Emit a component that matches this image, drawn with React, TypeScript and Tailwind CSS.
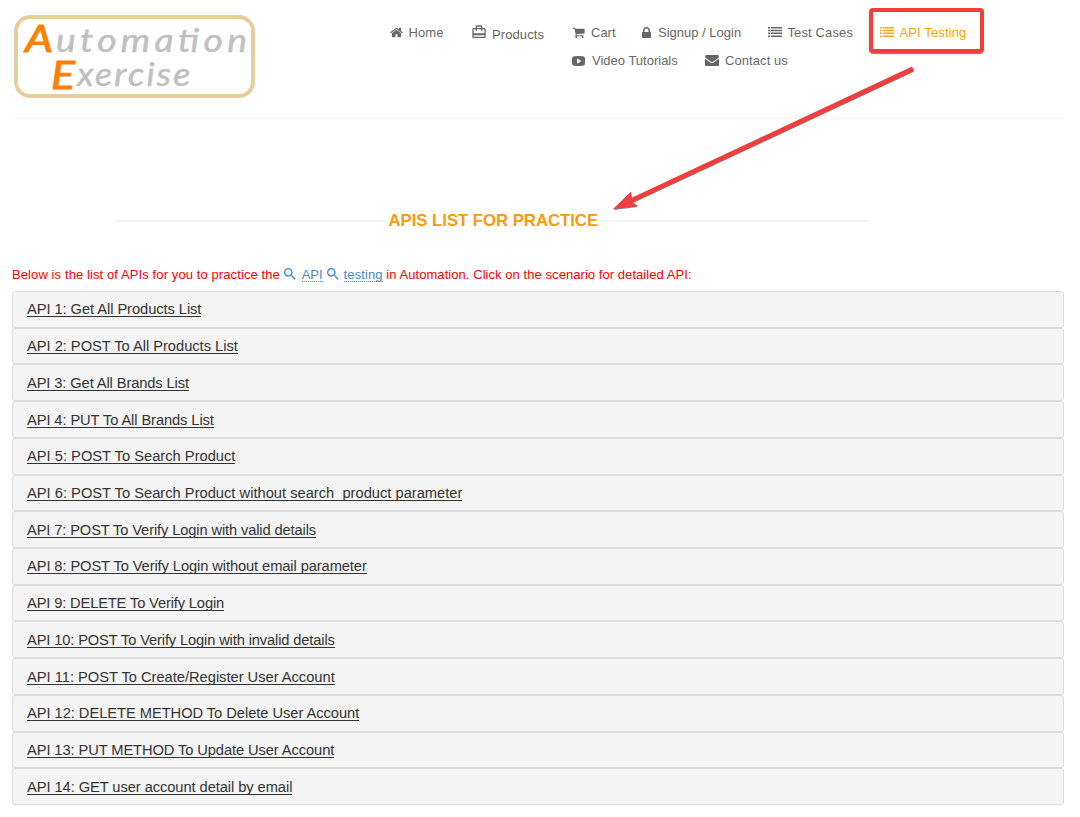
import type { ReactNode } from "react";
import { MdCardTravel, MdSearch } from "react-icons/md";

const HOME =
  "M1408 992v480q0 26-19 45t-45 19h-384v-384h-256v384h-384q-26 0-45-19t-19-45v-480q0-1 .5-3t.5-3l575-474 575 474q1 2 1 6zm223-69l-62 74q-8 9-21 11h-3q-13 0-21-7l-692-577-692 577q-12 8-24 7-13-2-21-11l-62-74q-8-10-7-23.5t11-21.5l719-599q32-26 76-26t76 26l244 204v-195q0-14 9-23t23-9h192q14 0 23 9t9 23v408l219 182q10 8 11 21.5t-7 23.5z";
const CART =
  "M704 1536q0 52-38 90t-90 38-90-38-38-90 38-90 90-38 90 38 38 90zm896 0q0 52-38 90t-90 38-90-38-38-90 38-90 90-38 90 38 38 90zm128-1088v512q0 24-16.5 42.5t-40.5 21.5l-1044 122q13 60 13 70 0 16-24 64h920q26 0 45 19t19 45-19 45-45 19h-1024q-26 0-45-19t-19-45q0-11 8-31.5t16-36 21.5-40 15.5-29.5l-177-823h-204q-26 0-45-19t-19-45 19-45 45-19h256q16 0 28.5 6.5t19.5 15.5 13 24.5 8 26 5.5 29.5 4.5 26h1201q26 0 45 19t19 45z";
const LOCK =
  "M640 768h512v-192q0-106-75-181t-181-75-181 75-75 181v192zm832 96v576q0 40-28 68t-68 28h-960q-40 0-68-28t-28-68v-576q0-40 28-68t68-28h32v-192q0-184 132-316t316-132 316 132 132 316v192h32q40 0 68 28t28 68z";
const MAIL =
  "M1792 710v794q0 66-47 113t-113 47h-1472q-66 0-113-47t-47-113v-794q44 49 101 87 362 246 497 345 57 42 92.5 65.5t94.5 48 110 24.5h2q51 0 110-24.5t94.5-48 92.5-65.5q170-123 498-345 57-39 100-87zm0-294q0 79-49 151t-122 123q-376 261-468 325-10 7-42.5 31t-54 38.5-52 32.5-57.5 27-50 9h-2q-23 0-50-9t-57.5-27-52-32.5-54-38.5-42.5-31q-91-64-262-182.5t-205-142.5q-62-42-117-115.5t-55-136.5q0-78 41.5-130t118.5-52h1472q65 0 112.5 47t47.5 113z";

function Glyph({ d, box = "0 0 1792 1792", className }: { d: string; box?: string; className: string }) {
  return (
    <svg viewBox={box} preserveAspectRatio="none" className={className} fill="currentColor">
      <path d={d} />
    </svg>
  );
}

function ListGlyph() {
  return (
    <svg viewBox="0 0 14 10" className="-mt-[2px] h-[10px] w-[14px]" fill="currentColor">
      <path d="M0 0h2v1.5H0zM3 0h11v1.5H3zM0 2.8h2v1.5H0zM3 2.8h11v1.5H3zM0 5.6h2v1.5H0zM3 5.6h11v1.5H3zM0 8.4h2V10H0zM3 8.4h11V10H3z" />
    </svg>
  );
}

function PlayGlyph() {
  return (
    <svg viewBox="0 0 13 10" className="-mt-px h-[10px] w-[13px]" fill="currentColor" fillRule="evenodd">
      <path d="M2 .2Q6.5-.2 11 .2 13 .4 13 2.5v5Q13 9.6 11 9.8 6.5 10.2 2 9.8 0 9.6 0 7.5v-5Q0 .4 2 .2zM5 2.3v5.4L9.4 5z" />
    </svg>
  );
}

function NavItem({ icon, slot, width, label, className = "" }: { icon: ReactNode; slot: string; width: string; label: string; className?: string }) {
  return (
    <li className={`${width} shrink-0 ${className}`}>
      <a href="#" className="flex h-5 items-center whitespace-nowrap">
        <span className={`${slot} flex shrink-0 items-center`}>{icon}</span>
        <span>{label}</span>
      </a>
    </li>
  );
}

function Logo() {
  return (
    <div className="ml-[14px] mt-[15px] h-[83px] w-[241px] shrink-0 rounded-[16px] border-[4px] border-[#e6cf9c] font-['Lato','Open_Sans',sans-serif] text-[#c0c0c0]">
      <svg viewBox="0 0 233 75" className="h-[75px] w-[233px] overflow-visible" fill="currentColor" stroke="currentColor" strokeWidth="0.5" fontStyle="italic" fontWeight="400">
        <text x="7" y="33" fontSize="37" textLength="28" lengthAdjust="spacingAndGlyphs" strokeWidth="0.9" className="fill-[#ff8000] stroke-[#ff8000]">A</text>
        <text transform="translate(38 33) scale(1.13 1)" fontSize="33" textLength="169" lengthAdjust="spacing">utomation</text>
        <text x="33" y="70" fontSize="38" textLength="24" lengthAdjust="spacingAndGlyphs" strokeWidth="0.9" className="fill-[#ff8000] stroke-[#ff8000]">E</text>
        <text transform="translate(59 67) scale(1.08 1)" fontSize="33" textLength="105" lengthAdjust="spacing">xercise</text>
      </svg>
    </div>
  );
}

const APIS = [
  { name: "API 1: Get All Products List", tracking: "tracking-[-0.07px]" },
  { name: "API 2: POST To All Products List", tracking: "tracking-[-0.03px]" },
  { name: "API 3: Get All Brands List", tracking: "tracking-[-0.115px]" },
  { name: "API 4: PUT To All Brands List", tracking: "tracking-[-0.1px]" },
  { name: "API 5: POST To Search Product", tracking: "tracking-[0px]" },
  { name: "API 6: POST To Search Product without search_product parameter", tracking: "tracking-[0px]" },
  { name: "API 7: POST To Verify Login with valid details", tracking: "tracking-[-0.13px]" },
  { name: "API 8: POST To Verify Login without email parameter", tracking: "tracking-[-0.1px]" },
  { name: "API 9: DELETE To Verify Login", tracking: "tracking-[-0.15px]" },
  { name: "API 10: POST To Verify Login with invalid details", tracking: "tracking-[-0.14px]" },
  { name: "API 11: POST To Create/Register User Account", tracking: "tracking-[-0.02px]" },
  { name: "API 12: DELETE METHOD To Delete User Account", tracking: "tracking-[-0.05px]" },
  { name: "API 13: PUT METHOD To Update User Account", tracking: "tracking-[-0.1px]" },
  { name: "API 14: GET user account detail by email", tracking: "tracking-[-0.075px]" },
];

export default function App() {
  return (
    <div className="relative h-[817px] w-[1080px] overflow-hidden bg-white font-['Liberation_Sans',Arial,sans-serif]">
      <header className="flex h-[118px]">
        <Logo />
        <nav className="ml-[135px] flex flex-col gap-2 pt-[23px] text-[13px] text-[#696763]">
          <ul className="flex h-5">
            <NavItem width="w-[82px]" slot="w-[18.5px]" label="Home" className="tracking-[0.1px]" icon={<Glyph d={HOME} className="-mt-[2px] h-[13px] w-[14px]" />} />
            <NavItem width="w-[100px]" slot="w-5" label="Products" className="pt-[2px] tracking-[0.1px]" icon={<MdCardTravel className="-mt-[6px] -ml-px h-[16px] w-[16px]" />} />
            <NavItem width="w-[70px]" slot="w-[19px]" label="Cart" icon={<Glyph d={CART} className="-mt-[2px] h-[13px] w-[13px]" />} />
            <NavItem width="w-[126px]" slot="w-4" label="Signup / Login" icon={<Glyph d={LOCK} box="320 128 1152 1408" className="-mt-[2px] h-[11px] w-[9px]" />} />
            <NavItem width="w-[112px]" slot="w-[19.5px]" label="Test Cases" className="tracking-[0.12px]" icon={<ListGlyph />} />
            <NavItem width="w-[100px]" slot="w-[19.5px]" label="API Testing" className="tracking-[0.12px] text-[#ffa500]" icon={<ListGlyph />} />
          </ul>
          <ul className="ml-[182px] flex">
            <NavItem width="w-[133px]" slot="w-5" label="Video Tutorials" icon={<PlayGlyph />} />
            <NavItem width="w-[100px]" slot="w-5" label="Contact us" className="tracking-[0.08px]" icon={<Glyph d={MAIL} box="0 256 1792 1408" className="-mt-px h-[11px] w-[14px]" />} />
          </ul>
        </nav>
      </header>

      <main className="mx-3 w-[1052px] border-t border-[#f3f3f3]">
        <div className="ml-[104px] mt-[92px] flex h-5 w-[754px] items-center">
          <span className="h-[2px] w-[272.5px] bg-[#f4f4f4]" />
          <h2 className="w-[210px] whitespace-nowrap text-[16.7px] font-bold text-[#fe980f]">APIS LIST FOR PRACTICE</h2>
          <span className="h-[2px] flex-1 bg-[#f4f4f4]" />
        </div>

        <p className="mt-[34px] flex h-5 items-center whitespace-pre text-[13px] text-[#ff0000]">
          <span className="tracking-[0.1px]">Below is the list of APIs for you to practice the </span>
          <MdSearch className="-ml-[2px] -mt-[2px] mr-[4px] h-[16px] w-[16px] text-[#428bca]" />
          <a href="#" className="border-b border-dotted border-[#428bca] pt-px leading-[12px] text-[#428bca]">API</a>
          <MdSearch className="-mt-[2px] ml-[2px] mr-[3px] h-[16px] w-[16px] text-[#428bca]" />
          <a href="#" className="border-b border-dotted border-[#428bca] pt-px leading-[12px] tracking-[0.1px] text-[#428bca]">testing</a>
          <span className="tracking-[0.06px]"> in Automation. Click on the scenario for detailed API:</span>
        </p>

        <div className="mt-[6px] flex h-[514px] flex-col">
          {APIS.map(({ name, tracking }) => (
            <section key={name} className="flex min-h-0 flex-1 items-center rounded-[3px] border border-[#dddddd] bg-[#f4f4f4] pl-[14px] shadow-[0_1px_1px_rgba(0,0,0,0.04)]">
              <a href="#" className={`whitespace-nowrap border-b border-[#333333] pt-[2px] text-[14.7px] leading-[13px] text-[#333333] ${tracking}`}>{name}</a>
            </section>
          ))}
        </div>
      </main>

      <div className="absolute left-[869px] top-[8px] h-[45px] w-[115px] rounded-[4px] border-4 border-[#f43c3c] shadow-[0_1px_1px_rgba(0,0,0,0.5)]" />
      <svg viewBox="0 0 320 160" className="absolute left-[603px] top-[60px] h-[160px] w-[320px] drop-shadow-[0_1px_0.5px_rgba(0,0,0,0.5)]">
        <path d="M28 140.5 310 8.7" stroke="#f43c3c" strokeWidth="4.6" />
        <path d="M10 149 28 131.500 29 139 31 143.500 35 146Z" fill="#f43c3c" />
      </svg>
    </div>
  );
}
